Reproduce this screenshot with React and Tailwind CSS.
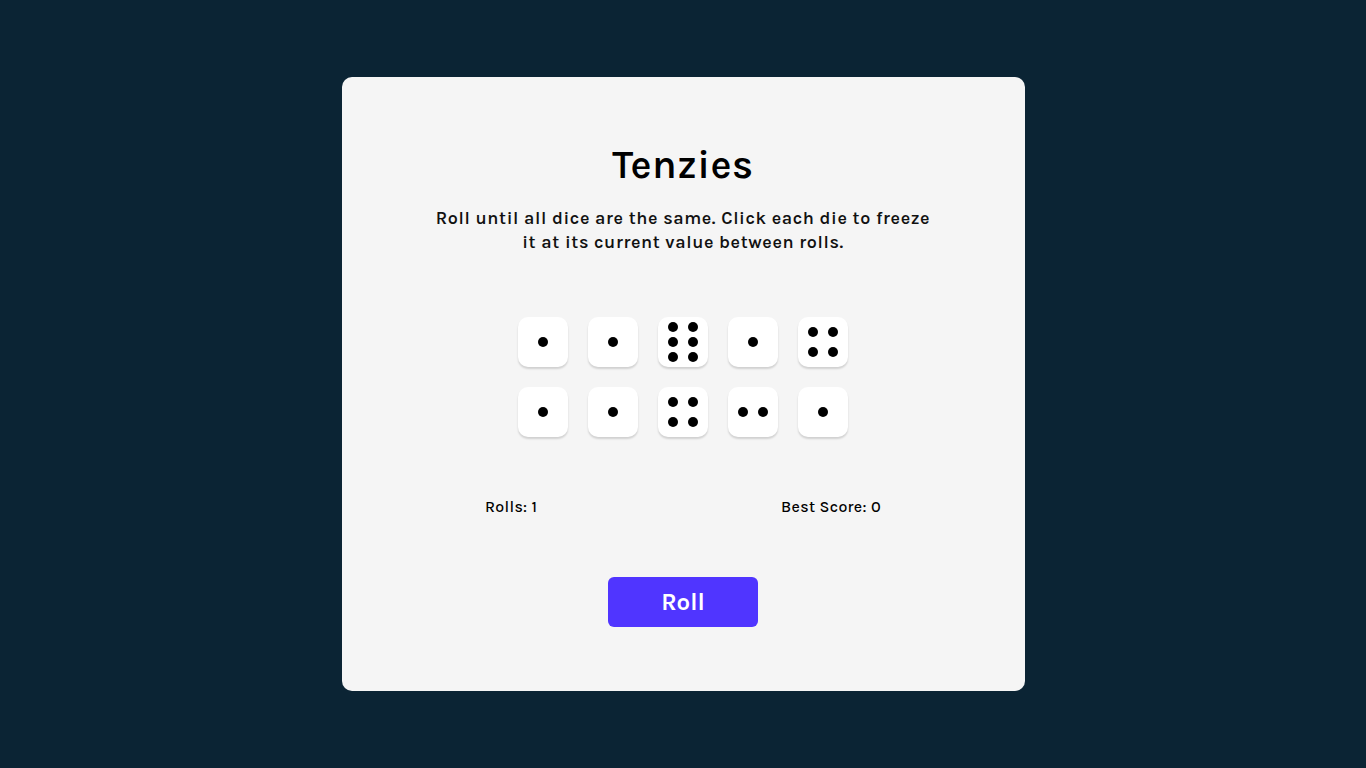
import React from "react";

const dice = [1, 1, 6, 1, 4, 1, 1, 4, 2, 1];

// dot positions in a 50x50 die, [left, top] of centre
const layouts = {
  1: [[25, 25]],
  2: [[15, 25], [35, 25]],
  4: [[15, 15], [35, 15], [15, 35], [35, 35]],
  6: [[15, 10], [35, 10], [15, 25], [35, 25], [15, 40], [35, 40]],
};

function Die({ value }) {
  return (
    <button className="relative w-[50px] h-[50px] rounded-[10px] bg-white shadow-[0_2px_2px_rgba(0,0,0,0.15)]">
      {layouts[value].map(([x, y], i) => (
        <span
          key={i}
          className="absolute w-[10px] h-[10px] rounded-full bg-black -translate-x-1/2 -translate-y-1/2"
          style={{ left: x, top: y }}
        />
      ))}
    </button>
  );
}

export default function App() {
  return (
    <div
      className="min-h-screen bg-[#0B2434] flex justify-center pt-[77px]"
      style={{ fontFamily: "Karla, Inter, 'Liberation Sans', sans-serif" }}
    >
      <main className="w-[683px] h-[614px] bg-[#F5F5F5] rounded-[10px] flex flex-col items-center pt-[62px]">
        <h1 className="text-[40px] leading-[52px] font-semibold tracking-[0.5px] text-black">Tenzies</h1>
        <p className="mt-[15px] w-[510px] text-center text-[18px] leading-[24px] font-semibold tracking-[0.6px] text-[#111]">
          Roll until all dice are the same. Click each die to freeze it at its current value between rolls.
        </p>
        <div className="mt-[63px] grid grid-cols-5 gap-[20px]">
          {dice.map((v, i) => (
            <Die key={i} value={v} />
          ))}
        </div>
        <div className="mt-[60px] w-[396px] flex justify-between text-[16px] leading-[20px] font-medium tracking-[0.3px] text-black">
          <span>Rolls: 1</span>
          <span>Best Score: 0</span>
        </div>
        <button className="mt-[60px] w-[150px] h-[50px] rounded-[6px] bg-[#5035FF] text-white text-[24px] font-bold">
          Roll
        </button>
      </main>
    </div>
  );
}
